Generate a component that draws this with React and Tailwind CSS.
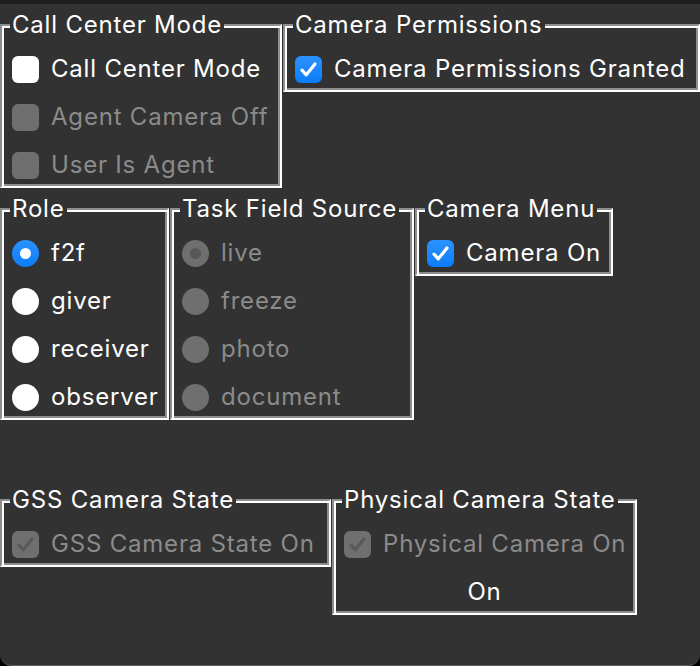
import React from 'react'

const groove =
  'shrink-0 border-2 border-t-[#8e8e8e] border-l-[#8e8e8e] border-r-white border-b-white shadow-[inset_2px_2px_0_#ffffff,inset_-2px_-2px_0_#8e8e8e]'

function Group({ title, width, children }) {
  return (
    <fieldset className={`${groove} ${width} pl-[10px] pr-[6px] pb-[1px]`}>
      <legend className="-ml-[2px] bg-[#323232] px-[2px] text-[24px] leading-[28px] text-white">
        {title}
      </legend>
      <div className="flex flex-col gap-2 pt-[10px]">{children}</div>
    </fieldset>
  )
}

function Tick({ color }) {
  return (
    <svg width="27" height="27" viewBox="0 0 27 27" fill="none">
      <path d="M7 14.2l4.3 4.6L20 8" stroke={color} strokeWidth="3.2" strokeLinecap="round" strokeLinejoin="round" />
    </svg>
  )
}

function Check({ label, checked, disabled }) {
  let box = 'bg-white'
  if (checked && !disabled) box = 'bg-gradient-to-b from-[#2a93ff] to-[#0a7cf7]'
  if (disabled) box = 'bg-[#6f6f6f]'
  return (
    <div className="flex h-10 items-center gap-3">
      <span className={`flex h-[27px] w-[27px] shrink-0 items-center justify-center rounded-[6px] ${box}`}>
        {checked && <Tick color={disabled ? '#595959' : '#ffffff'} />}
      </span>
      <span className={`whitespace-nowrap text-[24px] ${disabled ? 'text-[#8b8b8b]' : 'text-white'}`}>{label}</span>
    </div>
  )
}

function Radio({ label, selected, disabled }) {
  let circle = 'bg-white'
  if (selected && !disabled) circle = 'bg-gradient-to-b from-[#2a93ff] to-[#0a7cf7]'
  if (disabled) circle = 'bg-[#6f6f6f]'
  return (
    <div className="flex h-10 items-center gap-3">
      <span className={`flex h-[27px] w-[27px] shrink-0 items-center justify-center rounded-full ${circle}`}>
        {selected && <span className={`h-[11px] w-[11px] rounded-full ${disabled ? 'bg-[#575757]' : 'bg-white'}`} />}
      </span>
      <span className={`whitespace-nowrap text-[24px] ${disabled ? 'text-[#8b8b8b]' : 'text-white'}`}>{label}</span>
    </div>
  )
}

export default function App() {
  return (
    <div className="h-[666px] w-[700px] overflow-hidden bg-black font-['Inter',sans-serif] tracking-[0.8px]">
      <div className="flex h-full flex-col overflow-hidden rounded-b-[12px] border-b border-[#5a5a5a] bg-[#323232]">
        <div className="h-[4px] shrink-0 bg-[#1e1e1e]" />

        <div className="mt-[7px] flex items-start gap-px">
          <Group title="Call Center Mode" width="w-[282px]">
            <Check label="Call Center Mode" />
            <Check label="Agent Camera Off" disabled />
            <Check label="User Is Agent" disabled />
          </Group>
          <Group title="Camera Permissions" width="w-[417px]">
            <Check label="Camera Permissions Granted" checked />
          </Group>
        </div>

        <div className="mt-[7px] flex items-start gap-px">
          <Group title="Role" width="w-[169px]">
            <Radio label="f2f" selected />
            <Radio label="giver" />
            <Radio label="receiver" />
            <Radio label="observer" />
          </Group>
          <Group title="Task Field Source" width="w-[244px]">
            <Radio label="live" selected disabled />
            <Radio label="freeze" disabled />
            <Radio label="photo" disabled />
            <Radio label="document" disabled />
          </Group>
          <Group title="Camera Menu" width="w-[198px]">
            <Check label="Camera On" checked />
          </Group>
        </div>

        <div className="mt-[66px] flex items-start gap-px">
          <Group title="GSS Camera State" width="w-[331px]">
            <Check label="GSS Camera State On" checked disabled />
          </Group>
          <Group title="Physical Camera State" width="w-[305px]">
            <Check label="Physical Camera On" checked disabled />
            <div className="flex h-10 items-center justify-center pr-[4px] text-[24px] text-white">On</div>
          </Group>
        </div>
      </div>
    </div>
  )
}
